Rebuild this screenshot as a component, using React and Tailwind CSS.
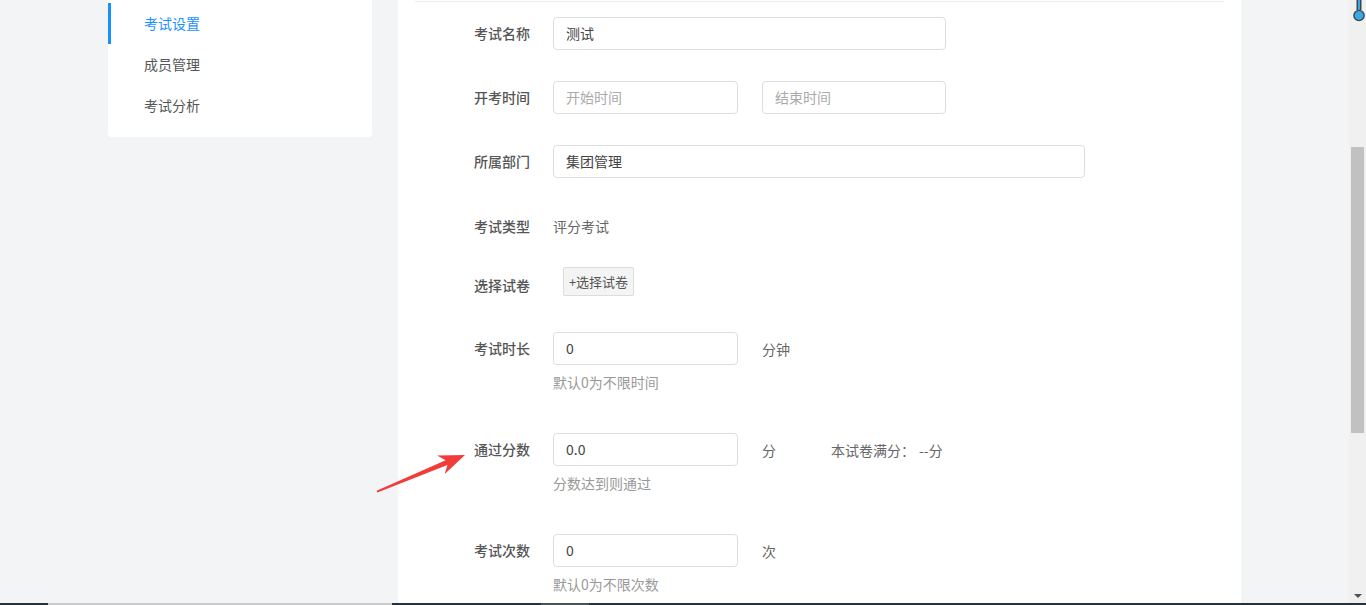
import React from 'react';

const menu = [
  { name: '考试设置', active: true },
  { name: '成员管理' },
  { name: '考试分析' },
];

const Label = ({ children, className = '' }) => (
  <div className={`w-[79px] shrink-0 h-[33px] leading-[33px] text-[14px] font-medium text-[#555] ${className}`}>
    {children}
  </div>
);

const Input = ({ value, placeholder, width }) => (
  <div
    className={`${width} h-[33px] border border-[#dcdee2] rounded-[4px] bg-white pl-[12px] leading-[31px] text-[14px] ${
      value ? 'text-[#444]' : 'text-[#aaa]'
    }`}
  >
    {value || placeholder}
  </div>
);

const Hint = ({ children }) => (
  <div className="mt-[7px] ml-[79px] h-[20px] leading-[20px] text-[14px] text-[#999]">{children}</div>
);

const ExamSettings = () => {
  return (
    <div className="pl-[76px]">
      {/* 考试名称 */}
      <div className="mt-[15px] flex">
        <Label>考试名称</Label>
        <Input value="测试" width="w-[393px]" />
      </div>

      {/* 开考时间 */}
      <div className="mt-[31px] flex">
        <Label>开考时间</Label>
        <Input placeholder="开始时间" width="w-[185px]" />
        <div className="ml-[24px]">
          <Input placeholder="结束时间" width="w-[184px]" />
        </div>
      </div>

      {/* 所属部门 */}
      <div className="mt-[31px] flex">
        <Label>所属部门</Label>
        <Input value="集团管理" width="w-[532px]" />
      </div>

      {/* 考试类型 */}
      <div className="mt-[32px] flex">
        <Label>考试类型</Label>
        <div className="h-[33px] leading-[33px] text-[14px] text-[#666]">评分考试</div>
      </div>

      {/* 选择试卷 */}
      <div className="mt-[24px] flex">
        <Label className="mt-[2px]">选择试卷</Label>
        <button className="ml-[10px] h-[29px] w-[71px] border border-[#dcdcdc] rounded-[2px] bg-[#f4f4f4] text-[13px] text-[#555] leading-[27px]">
          +选择试卷
        </button>
      </div>

      {/* 考试时长 */}
      <div className="mt-[30px]">
        <div className="flex">
          <Label>考试时长</Label>
          <Input value="0" width="w-[185px]" />
          <div className="ml-[24px] h-[33px] leading-[35px] text-[14px] text-[#666]">分钟</div>
        </div>
        <Hint>默认0为不限时间</Hint>
      </div>

      {/* 通过分数 */}
      <div className="mt-[41px]">
        <div className="flex">
          <Label>通过分数</Label>
          <Input value="0.0" width="w-[185px]" />
          <div className="ml-[24px] h-[33px] leading-[35px] text-[14px] text-[#666]">分</div>
          <div className="ml-[55px] h-[33px] leading-[35px] text-[14px] text-[#666]">
            本试卷满分：<span className="ml-[4px]">--分</span>
          </div>
        </div>
        <Hint>分数达到则通过</Hint>
      </div>

      {/* 考试次数 */}
      <div className="mt-[41px]">
        <div className="flex">
          <Label>考试次数</Label>
          <Input value="0" width="w-[185px]" />
          <div className="ml-[24px] h-[33px] leading-[35px] text-[14px] text-[#666]">次</div>
        </div>
        <Hint>默认0为不限次数</Hint>
      </div>
    </div>
  );
};

const App = () => {
  return (
    <div className="relative w-[1366px] h-[605px] overflow-hidden flex flex-col font-['Microsoft_YaHei','Noto_Sans_CJK_SC',sans-serif]">
      <div className="flex flex-1 min-h-0">
        <div className="flex-1 bg-[#f3f4f6] flex pl-[108px]">
          {/* side menu */}
          <div className="w-[264px] self-start bg-white rounded-b-[4px] pt-[3px] pb-[11px]">
            {menu.map((item) => (
              <div
                key={item.name}
                className={`h-[41px] leading-[40px] pl-[33px] text-[14px] border-l-[3px] ${
                  item.active ? 'border-[#1890ff] text-[#1890ff]' : 'border-transparent text-[#555]'
                }`}
              >
                {item.name}
              </div>
            ))}
          </div>

          {/* main panel */}
          <div className="ml-[26px] w-[843px] bg-white">
            <div className="px-[17px] pt-[1px]">
              <div className="h-px bg-[#ececec]" />
            </div>
            <ExamSettings />
          </div>
        </div>

        {/* browser scrollbar */}
        <div className="w-[17px] bg-[#f0f0f0] flex flex-col items-center">
          <div className="mt-[147px] w-[13px] h-[286px] bg-[#c1c1c1]" />
          <div className="flex-1" />
          <div className="mb-[5px] w-0 h-0 border-l-[4px] border-r-[4px] border-t-[4px] border-l-transparent border-r-transparent border-t-[#505050]" />
        </div>
      </div>

      {/* taskbar edge */}
      <div className="h-[2px] flex bg-[#263238]">
        <div className="ml-[48px] w-[344px] bg-[#c9c9c9]" />
        <div className="ml-[149px] w-[48px] bg-[#4a5458]" />
      </div>

      {/* annotation arrow */}
      <svg className="absolute left-0 top-0 pointer-events-none" width="1366" height="605">
        <polygon
          points="376.6,490.8 445.6,460.3 437.1,455.6 465,455 444.7,474.1 447.4,464.9 377.4,492.6"
          fill="#f23b3b"
        />
      </svg>

      {/* tray thermometer */}
      <svg className="absolute left-[1351px] top-0" width="15" height="22" viewBox="0 0 15 22">
        <rect x="5.5" y="-2" width="5" height="12" fill="#3b4653" />
        <rect x="7" y="0" width="2" height="11" fill="#39a9e0" />
        <circle cx="8" cy="15.5" r="5.8" fill="#3b4653" />
        <circle cx="8" cy="15.5" r="4.4" fill="#39a9e0" />
      </svg>
    </div>
  );
};

export default App;
